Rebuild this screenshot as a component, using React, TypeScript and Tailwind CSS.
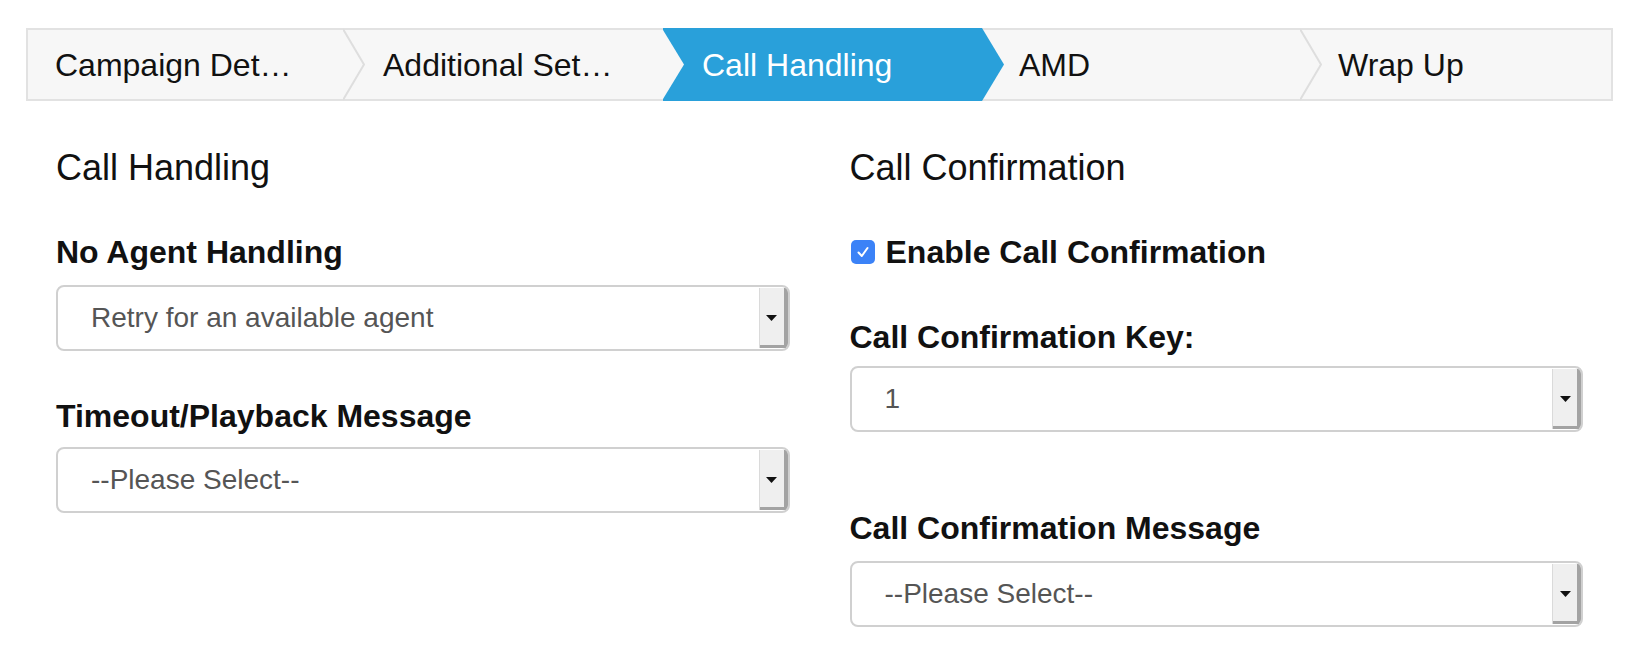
import React from "react"

const tabs = [
  { label: "Campaign Det…", w: "w-[317px]", pl: "pl-[27px] border-l-2" },
  { label: "Additional Set…", w: "w-[320px]", pl: "pl-[40px]" },
  { label: "Call Handling", w: "w-[319px]", pl: "pl-[39px]", active: true },
  { label: "AMD", w: "w-[318px]", pl: "pl-[37px]" },
  { label: "Wrap Up", w: "flex-1", pl: "pl-[38px] border-r-2", last: true },
]

function Arrow({ active, beforeActive }: { active?: boolean; beforeActive?: boolean }) {
  return (
    <svg className="absolute -top-[2px] -right-[22px] z-10" width="22" height="73" viewBox="0 0 22 73">
      {active ? (
        <polygon points="0,0 22,36.5 0,73" fill="#29a0da" />
      ) : (
        <>
          <polygon points="0,2 21,36.5 0,71" fill="#f7f7f7" />
          {!beforeActive && <polyline points="0,1 21,36.5 0,72" fill="none" stroke="#dedede" strokeWidth="2" />}
        </>
      )}
    </svg>
  )
}

function Select({ value }: { value: string }) {
  return (
    <div className="flex h-[66px] overflow-hidden rounded-[8px] border-2 border-[#d0d0d0] bg-white">
      <div className="flex flex-1 items-center pl-[33px] text-[28px] text-[#555]">{value}</div>
      <div className="my-[1px] flex w-[29px] items-center justify-center border-l border-[#dadada] bg-[#efefef] shadow-[inset_-4px_-3px_0_#a3a3a3]">
        <svg width="11" height="6" viewBox="0 0 11 6" className="-ml-[4px]">
          <polygon points="0,0 11,0 5.5,6" fill="#111" />
        </svg>
      </div>
    </div>
  )
}

export default function App() {
  return (
    <div className="min-h-[656px] bg-white pt-[28px] text-[#111]" style={{ fontFamily: '"Liberation Sans", Arial, sans-serif' }}>
      <div className="ml-[26px] w-[1587px]">
        {/* wizard steps */}
        <div className="flex">
          {tabs.map((t, i) => (
            <div
              key={t.label}
              className={`relative flex h-[73px] items-center border-y-2 text-[32px] ${t.w} ${t.pl} ${
                t.active ? "border-[#29a0da] bg-[#29a0da] text-white" : "border-[#e2e2e2] bg-[#f7f7f7] text-[#111]"
              }`}
            >
              <span className="whitespace-nowrap">{t.label}</span>
              {!t.last && <Arrow active={t.active} beforeActive={tabs[i + 1]?.active} />}
            </div>
          ))}
        </div>

        <div className="grid grid-cols-2">
          <div className="flex flex-col px-[30px]">
            <h2 className="mt-[47px] text-[36px] leading-[40px]">Call Handling</h2>
            <label className="mt-[46px] text-[32px] font-bold leading-[36px]">No Agent Handling</label>
            <div className="mt-[15px]">
              <Select value="Retry for an available agent" />
            </div>
            <label className="mt-[47px] text-[32px] font-bold leading-[36px]">Timeout/Playback Message</label>
            <div className="mt-[13px]">
              <Select value="--Please Select--" />
            </div>
          </div>

          <div className="flex flex-col px-[30px]">
            <h2 className="mt-[47px] text-[36px] leading-[40px]">Call Confirmation</h2>
            <div className="mt-[46px] flex h-[36px] items-center gap-[11px]">
              <span className="ml-[1px] flex h-[24px] w-[24px] items-center justify-center rounded-[5px] bg-[#3b82f7]">
                <svg width="16" height="16" viewBox="0 0 16 16">
                  <path d="M3.5 8.5 L6.8 12 L12.5 4" fill="none" stroke="#fff" strokeWidth="2" strokeLinecap="round" strokeLinejoin="round" />
                </svg>
              </span>
              <span className="text-[32px] font-bold">Enable Call Confirmation</span>
            </div>
            <label className="mt-[49px] text-[32px] font-bold leading-[36px]">Call Confirmation Key:</label>
            <div className="mt-[11px]">
              <Select value="1" />
            </div>
            <label className="mt-[78px] text-[32px] font-bold leading-[36px]">Call Confirmation Message</label>
            <div className="mt-[15px]">
              <Select value="--Please Select--" />
            </div>
          </div>
        </div>
      </div>
    </div>
  )
}
